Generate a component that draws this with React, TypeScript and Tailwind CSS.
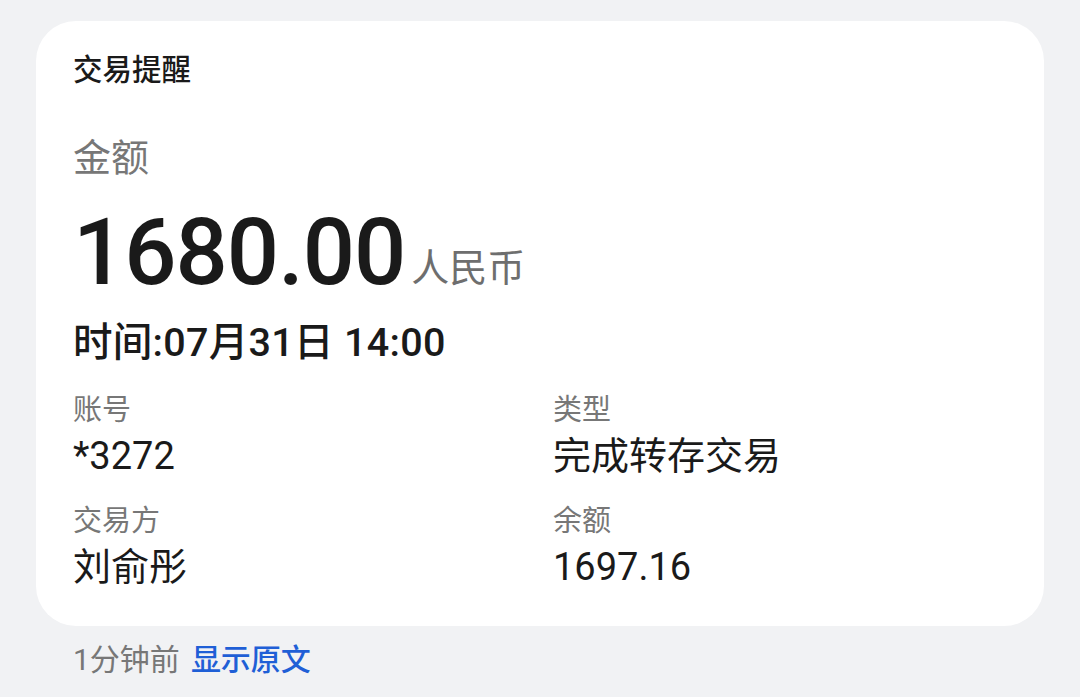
const FONT = "font-['Roboto','Noto_Sans_CJK_SC',sans-serif]";

interface Field {
  label: string;
  value: string;
}

const FIELDS: Field[] = [
  { label: '账号', value: '*3272' },
  { label: '类型', value: '完成转存交易' },
  { label: '交易方', value: '刘俞彤' },
  { label: '余额', value: '1697.16' },
];

function FieldCell({ label, value, first }: Field & { first: boolean }) {
  return (
    <div className={first ? 'mt-0' : 'mt-[21px]'}>
      <div className="text-[29px] leading-[40px] text-[#777777]">{label}</div>
      <div className="mt-[2px] text-[38px] leading-[48px] text-[#1a1a1a]">{value}</div>
    </div>
  );
}

export default function App() {
  return (
    <div className={`min-h-[697px] w-[1080px] bg-[#f1f2f4] pt-[21px] ${FONT}`}>
      <div className="mx-[36px] rounded-[40px] bg-white pl-[37px] pr-[37px] pt-[29px] pb-[35px]">
        <div className="text-[29.5px] font-medium leading-[40px] text-[#1a1a1a]">交易提醒</div>
        <div className="mt-[44px] text-[38px] leading-[48px] text-[#777777]">金额</div>
        <div className="mt-[16px] flex items-baseline">
          <span className="text-[92px] font-medium leading-[110px] tracking-[-1px] text-[#1a1a1a]">
            1680.00
          </span>
          <span className="ml-[6px] -translate-y-[3px] text-[38px] text-[#6e6e6e]">人民币</span>
        </div>
        <div className="mt-[11px] text-[39.5px] font-medium leading-[48px] tracking-[0.3px] text-[#1a1a1a]">
          时间:07月31日 14:00
        </div>
        <div className="mt-[23px] grid grid-cols-2">
          <div>
            <FieldCell {...FIELDS[0]} first />
            <FieldCell {...FIELDS[2]} first={false} />
          </div>
          <div className="pl-[13px]">
            <FieldCell {...FIELDS[1]} first />
            <FieldCell {...FIELDS[3]} first={false} />
          </div>
        </div>
      </div>
      <div className="mt-[14px] flex gap-[11px] pl-[73px] text-[30px] leading-[40px]">
        <span className="text-[#777777]">1分钟前</span>
        <span className="font-medium text-[#1f5fd6]">显示原文</span>
      </div>
    </div>
  );
}
